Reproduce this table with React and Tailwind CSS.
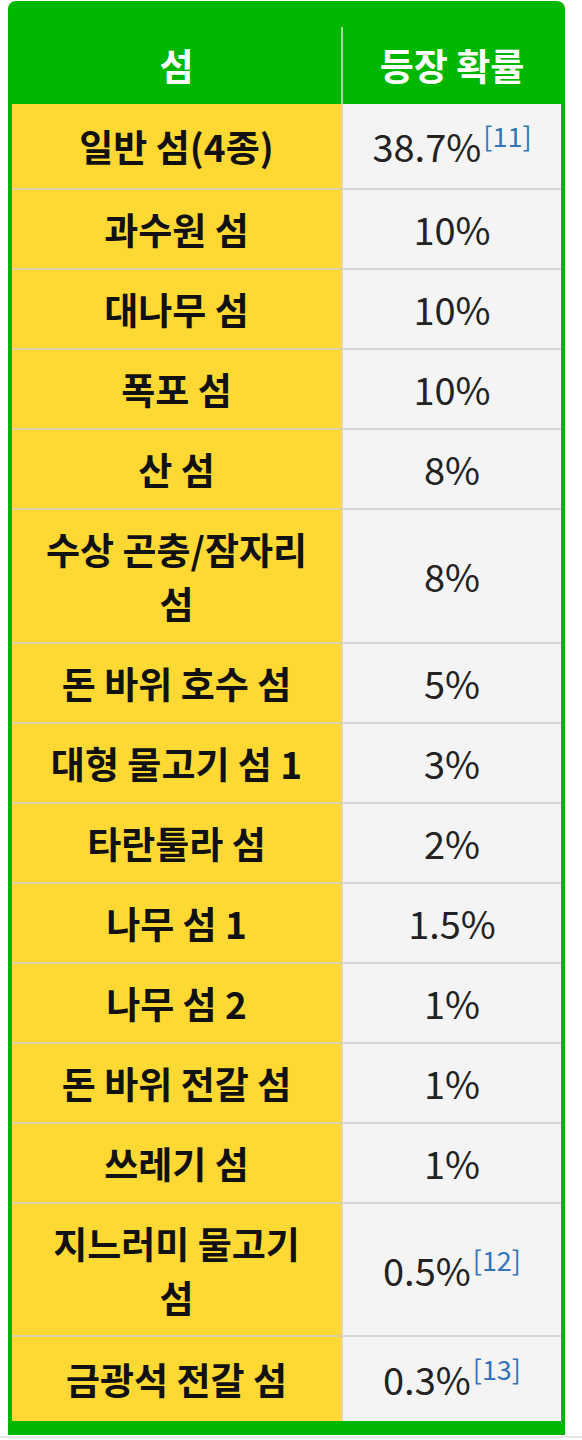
/**
 * Island spawn-rate table
 * Green header, yellow name column, grey rate column
 */

import React from 'react';

const rows = [
  { name: ['일반 섬(4종)'], rate: '38.7%', note: '11', h: 'h-[86px]' },
  { name: ['과수원 섬'], rate: '10%', h: 'h-[80px]' },
  { name: ['대나무 섬'], rate: '10%', h: 'h-[80px]' },
  { name: ['폭포 섬'], rate: '10%', h: 'h-[80px]' },
  { name: ['산 섬'], rate: '8%', h: 'h-[80px]' },
  { name: ['수상 곤충/잠자리', '섬'], rate: '8%', h: 'h-[134px]' },
  { name: ['돈 바위 호수 섬'], rate: '5%', h: 'h-[80px]' },
  { name: ['대형 물고기 섬 1'], rate: '3%', h: 'h-[80px]' },
  { name: ['타란툴라 섬'], rate: '2%', h: 'h-[80px]' },
  { name: ['나무 섬 1'], rate: '1.5%', h: 'h-[80px]' },
  { name: ['나무 섬 2'], rate: '1%', h: 'h-[80px]' },
  { name: ['돈 바위 전갈 섬'], rate: '1%', h: 'h-[80px]' },
  { name: ['쓰레기 섬'], rate: '1%', h: 'h-[80px]' },
  { name: ['지느러미 물고기', '섬'], rate: '0.5%', note: '12', h: 'h-[133px]' },
  { name: ['금광석 전갈 섬'], rate: '0.3%', note: '13', h: 'h-[84px]', last: true },
];

const font = { fontFamily: '"Noto Sans CJK KR", "Noto Sans", sans-serif' };

/**
 * One body row: island name and its spawn rate
 */
const Row = ({ row }) => {
  const line = row.last ? '' : 'border-b-2 border-b-[rgba(205,205,205,0.75)]';

  return (
    <div className={`flex ${row.h}`}>
      {/* Name cell */}
      <div
        className={`w-[331px] flex flex-col items-center justify-center bg-[#ffd933] border-r-2 border-r-[rgba(215,215,215,0.7)] ${line}`}
      >
        {row.name.map((text) => (
          <div key={text} className="text-[37px] leading-[54px] font-bold text-[#111] whitespace-nowrap">
            {text}
          </div>
        ))}
      </div>

      {/* Rate cell */}
      <div className={`w-[218px] flex items-center justify-center bg-[#f4f4f4] ${line}`}>
        <span className="text-[38px] leading-[54px] font-normal text-[#222] whitespace-nowrap">
          {row.rate}
          {row.note && (
            <span className="relative -top-[15px] text-[27px] leading-none text-[#3574bb] ml-[2px]">
              [{row.note}]
            </span>
          )}
        </span>
      </div>
    </div>
  );
};

const App = () => {
  return (
    <div className="w-[582px] h-[1440px] bg-white pt-[1px] pl-[8px] relative" style={font}>
      <div className="w-[557px] bg-[#00b700] rounded-t-[8px] pt-[26px] px-[4px] pb-[14px]">
        {/* Header */}
        <div className="flex h-[77px]">
          <div className="w-[331px] flex items-center justify-center border-r-2 border-r-[rgba(255,255,255,0.6)] text-white text-[37px] font-bold">
            섬
          </div>
          <div className="w-[218px] flex items-center justify-center text-white text-[37px] font-bold">
            등장 확률
          </div>
        </div>

        {/* Body */}
        {rows.map((row) => (
          <Row key={row.name.join(' ')} row={row} />
        ))}
      </div>

      {/* Page edge below the table */}
      <div className="h-[2px] bg-[#e6e6e6] mt-[1px] -ml-[8px]" />
    </div>
  );
};

export default App;
